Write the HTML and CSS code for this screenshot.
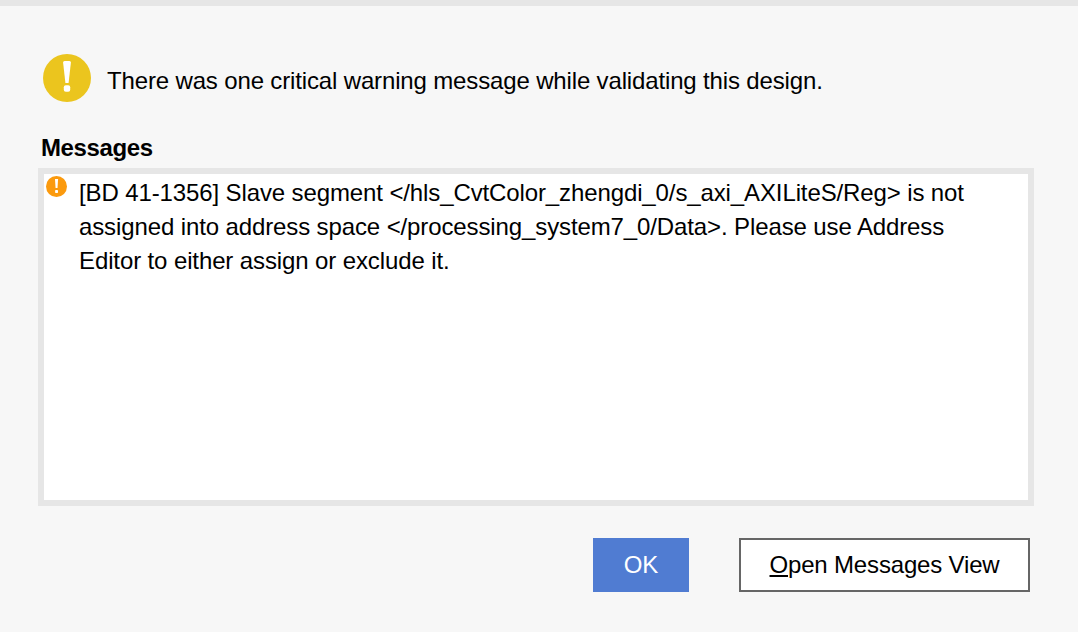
FILE: index.html
```html
<!DOCTYPE html>
<html lang="en">
<head>
<meta charset="utf-8">
<title>Validate Design</title>
<link rel="stylesheet" href="styles.css">
</head>
<body>
<div class="topbar"></div>
<main class="dialog">
  <div class="summary">
    <svg class="big-icon" viewBox="0 0 48 48" width="48" height="48" aria-hidden="true">
      <circle cx="24" cy="24" r="24" fill="#ebc51e"/>
      <path d="M21.6 7h4.8q1.6 0 1.5 1.6L25.6 29h-3.2L20.1 8.6Q20 7 21.6 7z" fill="#fff"/>
      <rect x="20.8" y="31.2" width="6.4" height="6.6" rx="2" fill="#fff"/>
    </svg>
    <span class="summary-text">There was one critical warning message while validating this design.</span>
  </div>
  <h2 class="label">Messages</h2>
  <div class="box">
    <svg class="small-icon" viewBox="0 0 21 21" width="21" height="21" aria-hidden="true">
      <circle cx="10.5" cy="10.5" r="10.5" fill="#fb9a0e"/>
      <path d="M9 3h3.1l-.6 9H9.6z" fill="#fff"/>
      <rect x="9.1" y="14" width="2.9" height="3" rx=".7" fill="#fff"/>
    </svg>
    <p class="message">[BD 41-1356] Slave segment &lt;/hls_CvtColor_zhengdi_0/s_axi_AXILiteS/Reg&gt; is not assigned into address space &lt;/processing_system7_0/Data&gt;. Please use Address Editor to either assign or exclude it.</p>
  </div>
  <div class="actions">
    <button class="btn primary" type="button">OK</button>
    <button class="btn secondary" type="button"><u>O</u>pen Messages View</button>
  </div>
</main>
</body>
</html>
```

FILE: styles.css
```css
* { box-sizing: border-box; }
html, body { margin: 0; height: 100%; }
body {
  background: #f7f7f7;
  color: #000;
  font-family: "Liberation Sans", Arial, sans-serif;
  font-size: 24px;
  overflow: hidden;
}
.topbar { height: 6px; background: #e6e6e6; }
.dialog {
  display: flex;
  flex-direction: column;
  padding: 48px 44px 0 38px;
}
.summary {
  display: flex;
  align-items: center;
  gap: 16px;
  padding-left: 5px;
  height: 48px;
}
.big-icon { flex: none; }
.summary-text {
  letter-spacing: -0.147px;
  padding-top: 6px;
}
.label {
  margin: 30px 0 0 3px;
  font-size: 24px;
  line-height: 32px;
  font-weight: 700;
  letter-spacing: -0.37px;
}
.box {
  display: flex;
  align-items: flex-start;
  margin-top: 4px;
  height: 338px;
  background: #fff;
  border: 6px solid #e6e6e6;
}
.small-icon { flex: none; margin: 2px 0 0 2px; }
.message {
  margin: 2px 43px 0 12px;
  line-height: 34px;
  letter-spacing: -0.115px;
}
.actions {
  display: flex;
  justify-content: flex-end;
  gap: 50px;
  margin-top: 32px;
  padding-right: 4px;
}
.btn {
  height: 54px;
  font: inherit;
  padding: 0;
}
.primary {
  width: 96px;
  background: #507cd2;
  color: #fff;
  border: 0;
}
.secondary {
  width: 291px;
  background: #fff;
  color: #000;
  border: 2px solid #666;
  letter-spacing: -0.17px;
}
```
